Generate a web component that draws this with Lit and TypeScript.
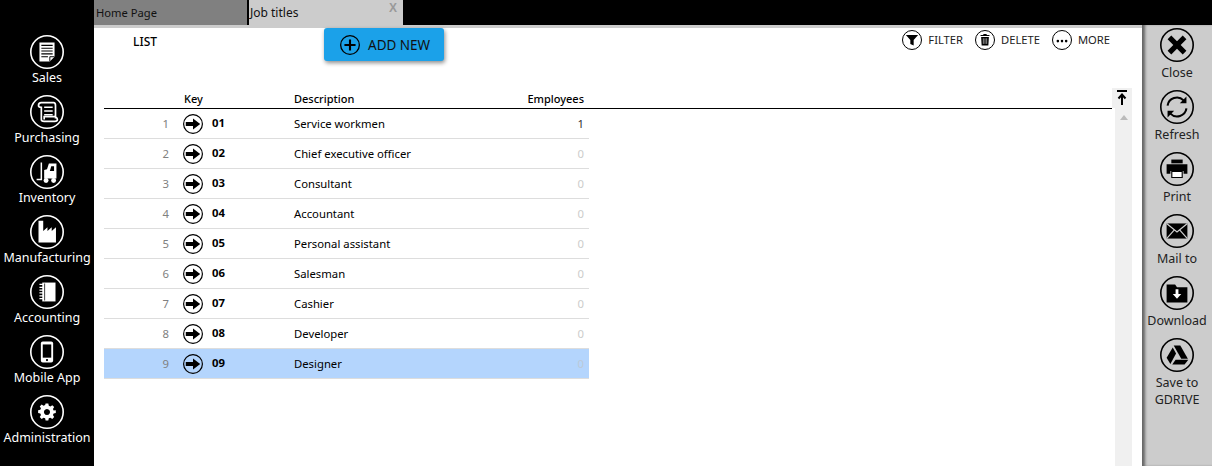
import { LitElement, html, css, svg } from "lit";
import { customElement } from "lit/decorators.js";

const circle = (inner: unknown, color: string, size: number, px = 1.6) => {
  const sw = (px * 36) / size;
  return html`<svg class="ic" width=${size} height=${size} viewBox="0 0 36 36" style="color:${color}">
  <circle cx="18" cy="18" r=${18 - sw / 2} fill="none" stroke="currentColor" stroke-width=${sw}></circle>${inner}</svg>`;
};

const I: Record<string, unknown> = {
  sales: svg`<path d="M10 8h16v15l-5 5H10z" fill="currentColor"/><path d="M12 11h12M12 14h12M12 17h12M12 20h12M12 23h7" stroke="#000" stroke-width="1.2"/><path d="M21 28v-5h5" fill="none" stroke="#000" stroke-width="1"/>`,
  purchasing: svg`<path d="M12 8h13c2 0 2 2 2 3v14M12 8c-2 0-3 1-3 3s2 2 3 2v13c0 2 2 2 3 2h11c2 0 3-1 3-2s-1-3-3-3H15v3" fill="none" stroke="currentColor" stroke-width="1.8"/><path d="M15 13h9M15 17h9M15 21h9" stroke="currentColor" stroke-width="1.6"/>`,
  inventory: svg`<path d="M12 8v18H7" fill="none" stroke="currentColor" stroke-width="1.6"/><path d="M15 25V16l3-1 2-6h8v16z" fill="currentColor"/><path d="M21 17l1.500-5h3v5z" fill="#000"/><circle cx="17" cy="27" r="2.600" fill="currentColor"/><circle cx="25" cy="27" r="2.600" fill="currentColor"/>`,
  manufacturing: svg`<path d="M9 6h5v11l4.500-4v4l4.500-4v4l4.500-4v16H9z" fill="currentColor"/>`,
  accounting: svg`<path d="M13 8h14v20H13z" fill="currentColor"/><path d="M10 10h5M10 13h5M10 16h5M10 19h5M10 22h5M10 25h5" stroke="currentColor" stroke-width="1.300"/><path d="M15.500 9v18" stroke="#000" stroke-width=".8"/>`,
  mobile: svg`<rect x="11.500" y="7" width="13" height="22" rx="2" fill="currentColor"/><rect x="13.500" y="10" width="9" height="14" fill="#000"/><circle cx="18" cy="26.500" r="1.200" fill="#000"/>`,
  admin: svg`<path fill="currentColor" fill-rule="evenodd" d="M16 7h4l.7 3.200 2.300 1 2.800-1.800 2.800 2.800-1.800 2.800 1 2.300L31 17v4l-3.200.7-1 2.300 1.800 2.800-2.800 2.800-2.800-1.800-2.300 1L20 32h-4l-.7-3.200-2.300-1-2.800 1.800-2.800-2.800 1.800-2.800-1-2.300L5 21v-4l3.200-.7 1-2.300-1.800-2.800 2.800-2.800 2.800 1.800 2.300-1zM18 15a4.500 4.500 0 1 0 .01 0z" transform="translate(5 4) scale(.72)"/>`,
  close: svg`<path d="M10 10l16 16M26 10L10 26" stroke="#000" stroke-width="5.500"/>`,
  refresh: svg`<path d="M8 16.500a10 10 0 0 1 17-5.500" fill="none" stroke="#000" stroke-width="2.200"/><path d="M28 7v7h-7z" fill="#000"/><path d="M28 19.500a10 10 0 0 1-17 5.500" fill="none" stroke="#000" stroke-width="2.200"/><path d="M8 29v-7h7z" fill="#000"/>`,
  print: svg`<path d="M12 8h12v4H12z" fill="#000"/><path d="M7 13h22v10h-4v-3H11v3H7z" fill="#000"/><path d="M12.500 20.500h11V27h-11z" fill="#fff" stroke="#000" stroke-width="1.200"/>`,
  mail: svg`<rect x="7" y="10" width="22" height="16" fill="#000"/><path d="M7 10l11 9 11-9M7 26l8-9M29 26l-8-9" fill="none" stroke="#cfcfcf" stroke-width="1.300"/>`,
  download: svg`<path d="M7 9h9l2 3h11v16H7z" fill="#000"/><path d="M16.500 14h3v5h3l-4.500 5-4.500-5h3z" fill="#fff"/>`,
  drive: svg`<path d="M14.500 8h7l8 14h-7z" fill="#000"/><path d="M13.500 10l3.500 6.500-6 11-4-6.500z" fill="#000"/><path d="M13 28l3.500-5H30l-4 5z" fill="#000"/>`,
  plus: svg`<path d="M18 8v20M8 18h20" stroke="#000" stroke-width="3.800"/>`,
  filter: svg`<path d="M7 9h22l-8 9v10l-6-3v-7z" fill="#000"/>`,
  trash: svg`<path d="M15 7h6v2h5v2H10V9h5z" fill="#000"/><path d="M11 12.500h14L24 28H12z" fill="#000"/><path d="M15 15v10M18 15v10M21 15v10" stroke="#fff" stroke-width="1"/>`,
  more: svg`<circle cx="10.500" cy="20" r="2.300" fill="#000"/><circle cx="18" cy="20" r="2.300" fill="#000"/><circle cx="25.500" cy="20" r="2.300" fill="#000"/>`,
  arrow: svg`<path d="M5 14.500h13V8l13 10-13 10v-6.500H5z" fill="#000"/>`,
};

const LEFT: [string, string][] = [["sales","Sales"],["purchasing","Purchasing"],["inventory","Inventory"],["manufacturing","Manufacturing"],["accounting","Accounting"],["mobile","Mobile App"],["admin","Administration"]];
const RIGHT: [string, string][] = [["close","Close"],["refresh","Refresh"],["print","Print"],["mail","Mail to"],["download","Download"],["drive","Save to GDRIVE"]];
const ROWS = ["Service workmen","Chief executive officer","Consultant","Accountant","Personal assistant","Salesman","Cashier","Developer","Designer"];

@customElement("app-root")
export class AppRoot extends LitElement {
  static styles = css`
    :host { display: block; width: 1212px; height: 466px; overflow: hidden; background: #000; font-family: "Noto Sans", "Open Sans", sans-serif; font-size: 12px; color: #000; }
    .ic { display: block; flex: none; }
    .shell { display: grid; grid-template-columns: 94px 1fr 70px; grid-template-rows: 25px 1fr; height: 466px; }
    .tabs { grid-column: 2 / 4; display: flex; align-items: stretch; gap: 2px; background: #000; }
    .tab { width: 153px; background: #808080; padding: 5px 0 0 2px; font-size: 11.200px; line-height: 16px; color: #111; box-sizing: border-box; }
    .tab.on { position: relative; width: 154px; background: #ccc; padding-left: 1px; font-size: 12px; }
    .x { position: absolute; left: 140px; top: 1px; font: bold 12px/14px "Liberation Sans", sans-serif; color: #999; }
    .left { grid-row: 1 / 3; grid-column: 1; display: flex; flex-direction: column; align-items: center; padding-top: 35px; background: #000; color: #fff; }
    .nav { height: 60px; display: flex; flex-direction: column; align-items: center; white-space: nowrap; font-size: 12.500px; line-height: 17px; flex: none; }
    .main { grid-column: 2; grid-row: 2; background: #fff; border-top: 3px solid #ccc; display: grid; grid-template-columns: 1021px 17px 10px; grid-template-rows: 60px 1fr; min-height: 0; }
    .toolbar { grid-column: 1 / 4; display: flex; align-items: flex-start; padding-left: 39px; }
    .list { font-size: 12px; font-weight: 500; line-height: 16px; margin-top: 6px; width: 191px; }
    .add { width: 120px; height: 33px; background: #1ba1e9; border-radius: 3px; box-shadow: 1px 2px 4px rgba(0,0,0,.45); display: flex; align-items: center; gap: 8px; padding-left: 16px; box-sizing: border-box; font-size: 13.500px; color: #111; }
    .actions { margin-left: auto; margin-right: 32px; display: flex; gap: 12px; padding-top: 2px; }
    .act { display: flex; align-items: center; gap: 6px; font-size: 11.200px; line-height: 20px; color: #222; }
    .grid { padding-left: 10px; font-size: 11.300px; }
    .hdr, .row { display: grid; grid-template-columns: 65px 43px 82px 232px 58px; align-items: center; width: 485px; }
    .hdr { width: 1008px; height: 20px; border-bottom: 1px solid #000; font-size: 11px; font-weight: 500; line-height: 16px; }
    .hdr .k { padding-left: 15px; }
    .hdr .e { text-align: right; white-space: nowrap; margin-left: -40px; }
    .hdr div { align-self: start; padding-top: 3px; }
    .row { height: 29px; border-bottom: 1px solid #ddd; }
    .row.sel { background: #b4d5fd; }
    .n { text-align: right; color: #808080; }
    .ar { margin-left: 14px; }
    .key { font-weight: 700; padding-bottom: 2px; }
    .emp { text-align: right; color: #ccc; }
    .emp.one { color: #333; }
    .row.sel .emp { color: #bcc9d8; }
    .sb { grid-column: 2; background: #f0f0f0; position: relative; }
    .top { position: absolute; left: -3px; top: 0; width: 20px; height: 20px; background: #f0f0f0; }
    .top svg { display: block; }
    .up { position: absolute; left: 5px; top: 27px; width: 0; height: 0; border-left: 4px solid transparent; border-right: 4px solid transparent; border-bottom: 5px solid #bbb; }
    .right { grid-column: 3; grid-row: 2; background: #ccc; box-shadow: inset 4px 0 3px -1px rgba(0,0,0,.5); display: flex; flex-direction: column; align-items: center; padding-top: 3px; color: #222; }
    .tool { height: 62px; display: flex; flex-direction: column; align-items: center; text-align: center; font-size: 12.500px; line-height: 17px; flex: none; width: 70px; }
    .tool span { margin-top: 2px; padding: 0 6px; }
  `;
  render() {
    return html`<div class="shell">
      <nav class="left">${LEFT.map(([i, l]) => html`<div class="nav">${circle(I[i], "#fff", 34, 1.600)}<span>${l}</span></div>`)}</nav>
      <div class="tabs"><div class="tab">Home Page</div><div class="tab on">Job titles<span class="x">X</span></div></div>
      <main class="main">
        <div class="toolbar">
          <div class="list">LIST</div>
          <div class="add">${circle(I.plus, "#000", 20, 1.300)}<span>ADD NEW</span></div>
          <div class="actions">
            <div class="act">${circle(I.filter, "#000", 20, 1)}FILTER</div>
            <div class="act">${circle(I.trash, "#000", 20, 1)}DELETE</div>
            <div class="act">${circle(I.more, "#000", 20, 1)}MORE</div>
          </div>
        </div>
        <div class="grid">
          <div class="hdr"><div></div><div class="k">Key</div><div></div><div>Description</div><div class="e">Employees</div></div>
          ${ROWS.map((d, i) => html`<div class="row ${i === 8 ? "sel" : ""}">
            <div class="n">${i + 1}</div>
            <div class="ar">${circle(I.arrow, "#000", 20, 1.200)}</div>
            <div class="key">0${i + 1}</div>
            <div>${d}</div>
            <div class="emp ${i === 0 ? "one" : ""}">${i === 0 ? 1 : 0}</div>
          </div>`)}
        </div>
        <div class="sb">
          <div class="top"><svg width="20" height="20" viewBox="0 0 20 20"><path d="M5 3h10" stroke="#000" stroke-width="2"/><path d="M10 17V8M6.500 10.500L10 6.500l3.500 4" fill="none" stroke="#000" stroke-width="2"/></svg></div>
          <div class="up"></div>
        </div>
      </main>
      <aside class="right">${RIGHT.map(([i, l]) => html`<div class="tool">${circle(I[i], "#000", 34, 1.600)}<span>${l}</span></div>`)}</aside>
    </div>`;
  }
}
